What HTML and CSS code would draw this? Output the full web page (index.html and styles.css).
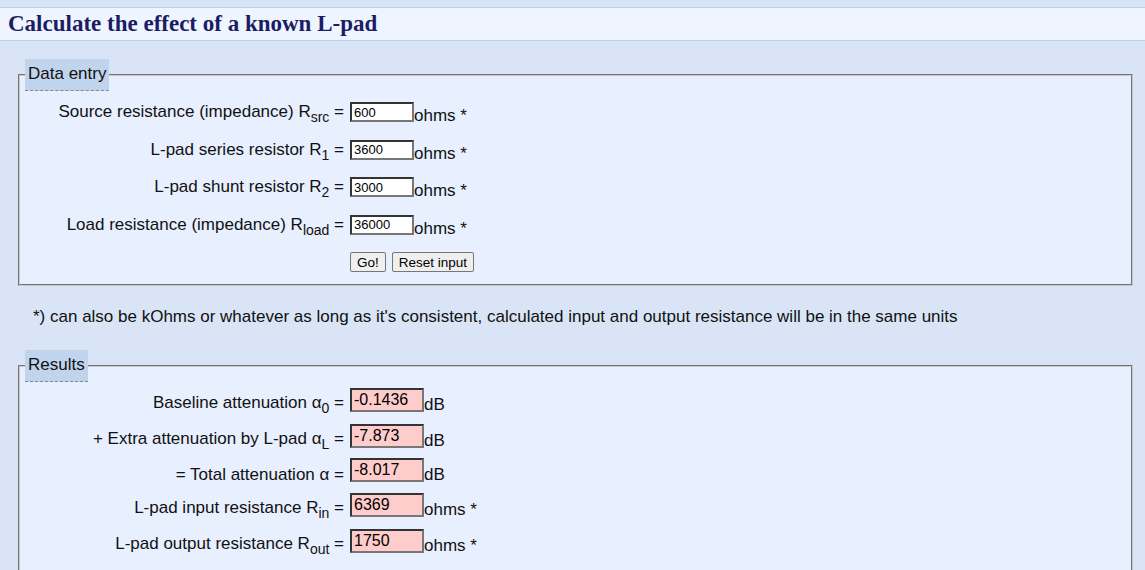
FILE: index.html
```html
<!DOCTYPE html>
<html lang="en">
<head>
    <meta charset="UTF-8">
    <title>L-pad calculator</title>
    <link rel="stylesheet" href="styles.css">
</head>
<body>
    <div class="header">
        <h1>Calculate the effect of a known L-pad</h1>
    </div>

    <div class="content">
        <fieldset>
            <legend>Data entry</legend>
            <table class="calc">
                <tr>
                    <td class="lbl">Source resistance (impedance) R<sub>src</sub> =</td>
                    <td><input type="text" class="inp" value="600">ohms *</td>
                </tr>
                <tr>
                    <td class="lbl">L-pad series resistor R<sub>1</sub> =</td>
                    <td><input type="text" class="inp" value="3600">ohms *</td>
                </tr>
                <tr>
                    <td class="lbl">L-pad shunt resistor R<sub>2</sub> =</td>
                    <td><input type="text" class="inp" value="3000">ohms *</td>
                </tr>
                <tr>
                    <td class="lbl">Load resistance (impedance) R<sub>load</sub> =</td>
                    <td><input type="text" class="inp" value="36000">ohms *</td>
                </tr>
                <tr>
                    <td></td>
                    <td class="buttons"><button>Go!</button><button>Reset input</button></td>
                </tr>
            </table>
        </fieldset>

        <p class="note">*) can also be kOhms or whatever as long as it's consistent, calculated input and output resistance will be in the same units</p>

        <fieldset class="results-box">
            <legend>Results</legend>
            <table class="calc results">
                <tr>
                    <td class="lbl">Baseline attenuation &alpha;<sub>0</sub> =</td>
                    <td><input type="text" class="out" value="-0.1436" readonly>dB</td>
                </tr>
                <tr>
                    <td class="lbl">+ Extra attenuation by L-pad &alpha;<sub>L</sub> =</td>
                    <td><input type="text" class="out" value="-7.873" readonly>dB</td>
                </tr>
                <tr>
                    <td class="lbl">= Total attenuation &alpha; =</td>
                    <td><input type="text" class="out" value="-8.017" readonly>dB</td>
                </tr>
                <tr>
                    <td class="lbl">L-pad input resistance R<sub>in</sub> =</td>
                    <td><input type="text" class="out" value="6369" readonly>ohms *</td>
                </tr>
                <tr>
                    <td class="lbl">L-pad output resistance R<sub>out</sub> =</td>
                    <td><input type="text" class="out" value="1750" readonly>ohms *</td>
                </tr>
            </table>
        </fieldset>
    </div>
</body>
</html>
```

FILE: styles.css
```css
body {
    margin: 0;
    padding-top: 7px;
    background-color: #d9e5f6;
    font-family: "Liberation Sans", Arial, sans-serif;
    font-size: 17px;
    color: #111;
}

.header {
    background-color: #eef5ff;
    border-top: 1px solid #b9d0ee;
    border-bottom: 1px solid #b9d0ee;
    padding: 0 8px;
}

h1 {
    margin: 0;
    font-family: "Liberation Serif", "Times New Roman", serif;
    font-size: 23px;
    font-weight: bold;
    line-height: 32px;
    color: #1c1c64;
}

.content {
    padding: 18px 12px 0 18px;
}

fieldset {
    margin: 0;
    padding: 0 0 5px 5px;
    border: 2px groove #c8c8c8;
    background-color: #e8efff;
}

.results-box {
    padding-bottom: 20px;
}

legend {
    padding: 6px 3px 7px;
    background-color: #c0d4ee;
    border-bottom: 1px dashed #888;
    line-height: 18px;
}

.calc {
    border-collapse: collapse;
    margin: 4px 0 0 15px;
}

.calc td {
    padding: 7px 0;
    vertical-align: middle;
    white-space: nowrap;
}

.calc td.lbl {
    width: 304px;
    padding-right: 6px;
    text-align: right;
}

.results td {
    padding: 7px 0 6px;
}

sub {
    font-size: 14px;
    vertical-align: -5px;
}

.inp {
    width: 64px;
    height: 20px;
    box-sizing: border-box;
    margin: 0;
    padding: 0 2px;
    font-family: "Liberation Sans", Arial, sans-serif;
    font-size: 13px;
    border: 2px solid;
    border-color: #333 #777 #777 #333;
    background-color: #fff;
    vertical-align: 4px;
}

.out {
    width: 74px;
    height: 24px;
    box-sizing: border-box;
    margin: -7px 0 -3px;
    padding: 0 2px;
    font-family: "Liberation Sans", Arial, sans-serif;
    font-size: 16px;
    border: 2px solid;
    border-color: #333 #777 #777 #333;
    background-color: #ffcccc;
    vertical-align: 5px;
}

.calc td.buttons {
    display: flex;
    gap: 6px;
    padding-top: 7px;
}

button {
    height: 20px;
    padding: 0 6px;
    font-family: "Liberation Sans", Arial, sans-serif;
    font-size: 13.5px;
    background-color: #efefef;
    border: 1px solid #767676;
    border-radius: 2px;
    color: #000;
}

.note {
    margin: 21px 0 23px 15px;
    line-height: 20px;
}
```
